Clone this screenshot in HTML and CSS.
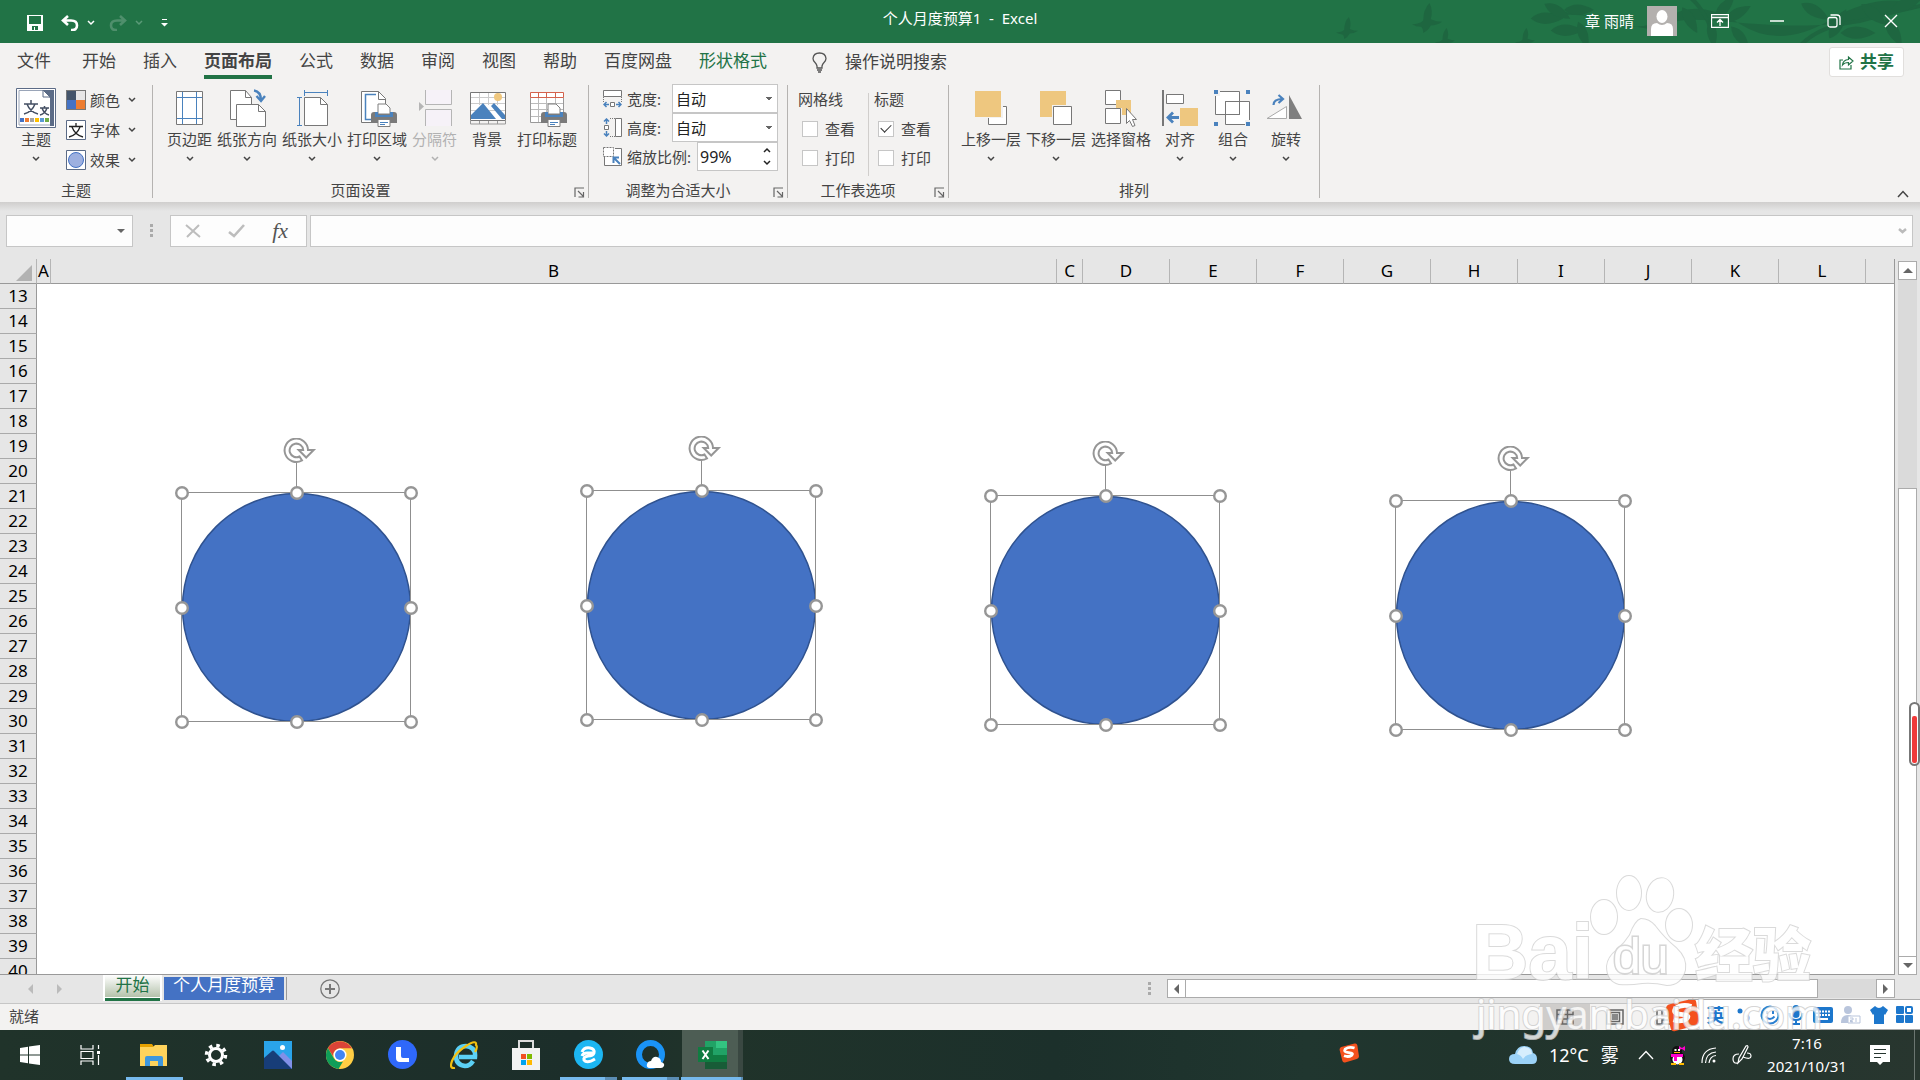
FILE: index.html
```html
<!DOCTYPE html>
<html lang="zh-CN">
<head>
<meta charset="utf-8">
<title>个人月度预算1 - Excel</title>
<link rel="stylesheet" href="styles.css">
</head>
<body>
<svg class="defs" width="0" height="0" aria-hidden="true">
  <defs>
    <symbol id="chev" viewBox="0 0 8 6"><path d="M1 1l3 3 3-3" fill="none" stroke="currentColor" stroke-width="1.500"/></symbol>
    <symbol id="launcher" viewBox="0 0 11 11"><path d="M1 10V1h9M4 4l5 5M9.500 5v5h-5" fill="none" stroke="#666" stroke-width="1.200"/></symbol>
    <symbol id="printer" viewBox="0 0 26 24">
      <path d="M3 9h20q3 0 3 3v8H0v-8q0-3 3-3z" fill="#7a7a7a"/>
      <path d="M7 1h8l4 4v6H7z" fill="#fff" stroke="#7f7f7f"/>
      <path d="M4 9h3v3h12V9h3v5H4z" fill="#4a82bd"/><path d="M7 16.500h12v7H7z" fill="#fff" stroke="#7f7f7f"/>
      <path d="M9 19.500h8M9 21.500h5" stroke="#4a82bd"/>
    </symbol>
    <symbol id="leaf" viewBox="0 0 30 12"><path d="M0 6Q12-5 30 6 12 16 0 6z"/></symbol>
    <symbol id="bird" viewBox="0 0 24 24"><path d="M0 17q6 0 9-3Q9 5 14 0q3 6 1 13 5 2 9 2-4 3-9 3-2 4-6 6 0-4-2-5-4 0-7-2z"/></symbol>
    <symbol id="sogou" viewBox="0 0 36 36">
      <path d="M4 7l24-6q4-1 5 3l3 20q0 4-4 5L11 35q-4 1-5-3L1 12q0-4 3-5z" fill="#f4511e"/>
      <path d="M28 9q-10-3-17 2-3 5 4 6l7 1q4 1 1 4-6 4-14 1" fill="none" stroke="#fff" stroke-width="5"/>
    </symbol>
    <symbol id="handles" viewBox="0 0 246 294">
      <path d="M121.500 25v30" stroke="#8f8f8f"/>
      <circle cx="121.500" cy="169.500" r="114" fill="#4472c4" stroke="#2f528f" stroke-width="1.500"/>
      <rect x="6.500" y="54.500" width="229" height="229" fill="none" stroke="#8f8f8f"/>
      <g fill="#fff" stroke="#969696" stroke-width="2.400">
        <circle cx="7" cy="55" r="5.800"/><circle cx="122" cy="55" r="5.800"/><circle cx="236" cy="55" r="5.800"/>
        <circle cx="7" cy="170" r="5.800"/><circle cx="236" cy="170" r="5.800"/>
        <circle cx="7" cy="284" r="5.800"/><circle cx="122" cy="284" r="5.800"/><circle cx="236" cy="284" r="5.800"/>
      </g>
      <path d="M133 12a11.700 11.700 0 1 0-6 10.500l-2.500-4a6.800 6.800 0 1 1 3.700-6.500h-4.500l7.500 7.500 7.500-7.500z" fill="#fff" stroke="#969696" stroke-width="2"/>
    </symbol>
  </defs>
</svg>

<div class="app">
  <header class="title-bar">
    <svg class="foliage" width="620" height="43" viewBox="0 0 620 43" fill="#1e6640" aria-hidden="true">
      <use href="#bird" x="36" y="17" width="22" height="22"/><use href="#bird" x="112" y="3" width="30" height="30"/>
      <use href="#bird" x="132" y="28" width="26" height="20"/><use href="#bird" x="212" y="28" width="26" height="20"/>
      <path d="M240 18q40-8 70 4t60-6 70 8 90-4 90-14v2q-50 12-88 16t-100-2-62 4-62-6-68 0z"/>
      <path d="M390 0q18 16 22 43h3Q414 20 396 0zM500 43q20-20 60-24l60-15v3l-60 16q-36 4-54 20z"/>
      <g>
        <use href="#leaf" x="230" y="12" width="34" height="13"/><use href="#leaf" x="244" y="0" width="30" height="14" transform="rotate(30 250 6)"/>
        <use href="#leaf" x="250" y="24" width="34" height="13"/><use href="#leaf" x="278" y="24" width="28" height="12" transform="rotate(70 284 26)"/>
        <use href="#leaf" x="262" y="4" width="34" height="12"/><use href="#leaf" x="376" y="14" width="30" height="16" transform="rotate(60 392 20)"/>
        <use href="#leaf" x="410" y="6" width="30" height="12" transform="rotate(-50 420 10)"/><use href="#leaf" x="424" y="12" width="30" height="12" transform="rotate(-30 430 18)"/>
        <use href="#leaf" x="430" y="26" width="28" height="11" transform="rotate(50 436 30)"/><use href="#leaf" x="404" y="20" width="28" height="11" transform="rotate(80 410 26)"/>
        <use href="#leaf" x="500" y="2" width="32" height="13" transform="rotate(30 510 8)"/><use href="#leaf" x="520" y="18" width="34" height="15" transform="rotate(-60 536 24)"/>
        <use href="#leaf" x="540" y="26" width="36" height="14"/><use href="#leaf" x="560" y="4" width="34" height="13" transform="rotate(40 570 8)"/>
        <use href="#leaf" x="584" y="22" width="34" height="13" transform="rotate(60 594 24)"/><use href="#leaf" x="590" y="0" width="34" height="13" transform="rotate(-20 600 6)"/>
      </g>
    </svg>
    <div class="quick-access">
      <button class="plain save" aria-label="保存"><svg width="16" height="16" viewBox="0 0 16 16"><path d="M0 0h16v16H0z" fill="#fff"/><path d="M2 1h12v8H2zM5 11h6v4H8v-3H7v3H5z" fill="#217346"/></svg></button>
      <button class="plain undo" aria-label="撤消"><svg width="18" height="16" viewBox="0 0 18 16" fill="none" stroke="#fff" stroke-width="2.600"><path d="M7 1L2 5.500 7 10M2 5.500h8q6 0 6 5t-6 4.500"/></svg></button>
      <button class="plain drop" aria-label="撤消列表"><svg width="8" height="6" color="#fff"><use href="#chev"/></svg></button>
      <button class="plain redo" aria-label="恢复" disabled><svg width="18" height="16" viewBox="0 0 18 16" fill="none" stroke="#4f8f6c" stroke-width="2.600"><path d="M11 1l5 4.500L11 10M16 5.500H8q-6 0-6 5t6 4.500"/></svg></button>
      <button class="plain drop" aria-label="恢复列表" disabled><svg width="8" height="6" color="#5b9a78"><use href="#chev"/></svg></button>
      <button class="plain customize" aria-label="自定义快速访问工具栏"><svg width="7" height="8" viewBox="0 0 7 8" fill="#fff"><path d="M1 0h5v1H1zM0 4h7L3.500 7.500z"/></svg></button>
    </div>
    <h1 class="doc-title">个人月度预算1 &nbsp;- &nbsp;Excel</h1>
    <div class="window-tools">
      <span class="user">章 雨晴</span>
      <svg class="avatar" width="30" height="30" viewBox="0 0 30 30"><path d="M0 0h30v30H0z" fill="#b3b0ae"/><ellipse cx="15" cy="10.500" rx="5.500" ry="6.500" fill="#fff"/><path d="M4 30V23q0-6 6-6 5 4 10 0 6 0 6 6v7z" fill="#fff"/></svg>
      <button class="plain win" aria-label="功能区显示选项"><svg width="18" height="14" viewBox="0 0 18 14" fill="none" stroke="#fff"><path d="M.5.5h17v13H.5zM.5 3.500h17M9 12V6M6 8.500l3-3 3 3" stroke-width="1.300"/></svg></button>
      <button class="plain win" aria-label="最小化"><svg width="14" height="2" viewBox="0 0 14 2"><path d="M0 1h14" stroke="#fff" stroke-width="1.500"/></svg></button>
      <button class="plain win" aria-label="还原"><svg width="14" height="14" viewBox="0 0 14 14" fill="none" stroke="#fff" stroke-width="1.300"><rect x="1" y="3.500" width="9" height="9.500" rx="2"/><path d="M3.500 1H10q3 0 3 3v7"/></svg></button>
      <button class="plain win" aria-label="关闭"><svg width="14" height="14" viewBox="0 0 14 14" stroke="#fff" stroke-width="1.400"><path d="M1 1l12 12M13 1L1 13"/></svg></button>
    </div>
  </header>

  <nav class="tabs">
    <a class="tab file" href="#">文件</a><a class="tab" href="#">开始</a><a class="tab" href="#">插入</a><a class="tab active" href="#">页面布局</a><a class="tab" href="#">公式</a><a class="tab" href="#">数据</a><a class="tab" href="#">审阅</a><a class="tab" href="#">视图</a><a class="tab" href="#">帮助</a><a class="tab" href="#">百度网盘</a><a class="tab contextual" href="#">形状格式</a>
    <button class="plain tell-me"><svg width="15" height="21" viewBox="0 0 15 21" fill="none" stroke="#555" stroke-width="1.300"><path d="M5 16v-2Q4.500 12 3 10.500 1 8.500 1 6.500 1.500 1 7.500 1T14 6.500q0 2-2 4-1.500 1.500-2 3.500v2zM5 18h5M6 20h3"/></svg><span>操作说明搜索</span></button>
    <button class="share"><svg width="15" height="15" viewBox="0 0 15 15" fill="none" stroke="#217346" stroke-width="1.200"><path d="M4 5H1v9h11v-4M3.500 10Q4 5 9.500 4.500V2l4.500 4-4.500 4V7.500Q5.500 7.500 3.500 10z"/></svg><span>共享</span></button>
  </nav>

  <section class="ribbon">
    <div class="group g-theme">
      <div class="tools">
        <button class="big w46"><svg width="40" height="40" viewBox="0 0 40 40"><path d="M.5.500h39v39H.5z" fill="#fff" stroke="#5b6b86"/><path d="M3 2.500h28l6 7V37H3z" fill="#fff" stroke="#9aa5b8"/><path d="M27 2h11v36h-4V10z" fill="#5b6b86"/><path d="M27 2v7h7z" fill="#fff" stroke="#5b6b86"/><g fill="none" stroke="#444f63" stroke-width="1.500"><path d="M8 16h14M15 12v4M11 16q3 8 11 10M19 16q-3 8-11 10M24 20h9M28.500 18v2M26 20q2 6 7 7M31 20q-2 6-7 7"/></g><path d="M4 30h4v4H4z" fill="#4472c4"/><path d="M9 30h4v4H9z" fill="#ed7d31"/><path d="M14 30h4v4h-4z" fill="#a5a5a5"/><path d="M19 30h4v4h-4z" fill="#ffc000"/><path d="M24 30h4v4h-4z" fill="#5b9bd5"/><path d="M29 30h4v4h-4z" fill="#70ad47"/></svg><span>主题</span><svg class="chev" width="8" height="6"><use href="#chev"/></svg></button>
        <div class="stack">
          <button class="small"><svg width="20" height="20" viewBox="0 0 20 20"><path d="M0 0h20v20H0z" fill="#777"/><path d="M1 1h9v9H1z" fill="#44546a"/><path d="M10 1h9v9h-9z" fill="#e7e6e6"/><path d="M1 10h9v9H1z" fill="#4472c4"/><path d="M10 10h9v9h-9z" fill="#ed7d31"/></svg><span>颜色</span><svg class="chev" width="8" height="6"><use href="#chev"/></svg></button>
          <button class="small"><svg width="20" height="20" viewBox="0 0 20 20"><path d="M.5.500h19v19H.5z" fill="#fff" stroke="#5b6b86"/><path d="M3 6.500h14M10 3v3M6 7q3 8 11 10M14 7q-3 8-11 10" fill="none" stroke="#222" stroke-width="1.300"/></svg><span>字体</span><svg class="chev" width="8" height="6"><use href="#chev"/></svg></button>
          <button class="small"><svg width="20" height="20" viewBox="0 0 20 20"><path d="M.5.500h19v19H.5z" fill="#fff" stroke="#5b6b86"/><circle cx="10" cy="10" r="7.500" fill="#9db0e0" stroke="#4472c4"/></svg><span>效果</span><svg class="chev" width="8" height="6"><use href="#chev"/></svg></button>
        </div>
      </div>
      <div class="caption">主题</div>
    </div>

    <div class="group g-page">
      <div class="tools">
        <button class="big w45"><svg width="40" height="40" viewBox="0 0 40 40"><path d="M6.500 3.500h26v33h-26z" fill="#fff" stroke="#777"/><path d="M12.500 4v32M26.500 4v32M7 9.500h25M7 30.500h25" stroke="#4a82bd"/></svg><span>页边距</span><svg class="chev" width="8" height="6"><use href="#chev"/></svg></button>
        <button class="big w60"><svg width="40" height="40" viewBox="0 0 40 40"><path d="M3.500 2.500h15l6 7v22h-21z" fill="#fff" stroke="#777"/><path d="M18.500 2.500v7h6" fill="none" stroke="#777"/><path d="M9.500 16.500h22l7 7v15h-29z" fill="#fff" stroke="#777"/><path d="M31.500 16.500v7h7" fill="none" stroke="#777"/><path d="M27 2.500q7 1 7 10M29.500 8l4.500 5 4-5" fill="none" stroke="#4a82bd" stroke-width="2.400"/></svg><span>纸张方向</span><svg class="chev" width="8" height="6"><use href="#chev"/></svg></button>
        <button class="big w60"><svg width="40" height="40" viewBox="0 0 40 40"><path d="M12.500 9.500h16l7 7v21h-23z" fill="#fff" stroke="#777"/><path d="M28.500 9.500v7h7" fill="none" stroke="#777"/><path d="M12.500 2v6M35.500 2v6M13 4.500h22M5 9.500h5M5 37.500h5M7.500 10v27" stroke="#4a82bd"/></svg><span>纸张大小</span><svg class="chev" width="8" height="6"><use href="#chev"/></svg></button>
        <button class="big w60"><svg width="40" height="40" viewBox="0 0 40 40"><path d="M4.500 3.500h17l7 7v24h-24z" fill="#fff" stroke="#777"/><path d="M21.500 3.500v8h7" fill="none" stroke="#777"/><path d="M19 6.500H8.500v25H16" fill="none" stroke="#4a82bd" stroke-width="1.500"/><use href="#printer" x="14" y="15" width="26" height="24"/></svg><span>打印区域</span><svg class="chev" width="8" height="6"><use href="#chev"/></svg></button>
        <button class="big w45" disabled><svg width="40" height="40" viewBox="0 0 40 40"><path d="M11 2h25v14H11zM11 21h25v17H11z" fill="#f6f2f8"/><path d="M10.500 2v14.500h26V2M10.500 38V21.500h26V38" fill="none" stroke="#b5b5b5"/><path d="M4 14v9l5-4.500z" fill="#b5b5b5"/></svg><span>分隔符</span><svg class="chev" width="8" height="6"><use href="#chev"/></svg></button>
        <button class="big w50"><svg width="40" height="40" viewBox="0 0 40 40"><path d="M3.500 4.500h35v28h-35z" fill="#fff" stroke="#777"/><path d="M4 9.500h34M4 15.500h34M4 22.500h34M12.500 5v12M21.500 5v12M30.500 5v12" stroke="#ccc"/><circle cx="31" cy="9" r="4" fill="#efc77e"/><path d="M4 31v-4l12-12 13 16zM24 18l3-3 11 12v4h-3z" fill="#4a82bd"/><path d="M3.500 32v4h35v-4M12.500 33v3M21.500 33v3M30.500 33v3" fill="none" stroke="#999"/></svg><span>背景</span></button>
        <button class="big w60"><svg width="40" height="40" viewBox="0 0 40 40"><path d="M3.500 9.500h33v25h-33z" fill="#fff" stroke="#999"/><path d="M4 15.500h32M4 21.500h32M4 28.500h20M11.500 9v25M19.500 9v25M28.500 9v14" stroke="#bbb"/><path d="M3.500 4.500h33v5h-33zM11.500 4v6M19.500 4v6M28.500 4v6" fill="#fff" stroke="#d4624c"/><use href="#printer" x="14" y="15" width="26" height="24"/></svg><span>打印标题</span></button>
      </div>
      <div class="caption">页面设置<button class="plain launch" aria-label="页面设置选项"><svg width="11" height="11"><use href="#launcher"/></svg></button></div>
    </div>

    <div class="group g-scale">
      <div class="fields">
        <div class="field"><svg width="19" height="19" viewBox="0 0 19 19"><path d="M.5 1.500h18v6H.5z" fill="#fff" stroke="#777"/><path d="M.5 8v5M18.500 8v5" stroke="#777" stroke-dasharray="1 1"/><path d="M6 15.500H1M3.500 13L1 15.500 3.500 18M13 15.500h5M15.500 13l2.500 2.500-2.500 2.500" fill="none" stroke="#4a82bd" stroke-width="1.500"/><path d="M7.500 13.500h4v4h-4z" fill="#fff" stroke="#777"/></svg><label for="fit-w">宽度:</label><select id="fit-w"><option>自动</option></select></div>
        <div class="field"><svg width="19" height="19" viewBox="0 0 19 19"><path d="M12.500.500h6v18h-6z" fill="#fff" stroke="#777"/><path d="M12 .5H7M12 18.500H7" stroke="#777" stroke-dasharray="1 1"/><path d="M3.500 6V1M1 3.500L3.500 1 6 3.500M3.500 13v5M1 15.500L3.500 18 6 15.500" fill="none" stroke="#4a82bd" stroke-width="1.500"/><path d="M1.500 7.500h4v4h-4z" fill="#fff" stroke="#777"/></svg><label for="fit-h">高度:</label><select id="fit-h"><option>自动</option></select></div>
        <div class="field"><svg width="19" height="19" viewBox="0 0 19 19"><path d="M1.500 10v8.500h17v-17H12" fill="#fff" stroke="#777"/><path d="M.5.500h10v9H.5z" fill="#fff" stroke="#777" stroke-dasharray="2 1"/><path d="M17 17l-6-6M10.500 16v-5.500H16" fill="none" stroke="#4a82bd" stroke-width="2"/></svg><label for="fit-s">缩放比例:</label><span class="spin"><input id="fit-s" type="text" value="99%"><span class="spin-buttons"><button class="plain" aria-label="增大"><svg class="flip" width="8" height="6"><use href="#chev"/></svg></button><button class="plain" aria-label="减小"><svg width="8" height="6"><use href="#chev"/></svg></button></span></span></div>
      </div>
      <div class="caption">调整为合适大小<button class="plain launch" aria-label="缩放选项"><svg width="11" height="11"><use href="#launcher"/></svg></button></div>
    </div>

    <div class="group g-options">
      <div class="options">
        <fieldset class="checks"><legend>网格线</legend><label><input type="checkbox">查看</label><label><input type="checkbox">打印</label></fieldset>
        <i class="rule"></i>
        <fieldset class="checks"><legend>标题</legend><label><input type="checkbox" checked>查看</label><label><input type="checkbox">打印</label></fieldset>
      </div>
      <div class="caption">工作表选项<button class="plain launch" aria-label="工作表选项"><svg width="11" height="11"><use href="#launcher"/></svg></button></div>
    </div>

    <div class="group g-arrange">
      <div class="tools">
        <button class="big w60"><svg width="40" height="40" viewBox="0 0 40 40"><path d="M17.500 18.500h18v18h-18z" fill="#fff" stroke="#777"/><path d="M3 3h29v27H3z" fill="#f3f2f1"/><path d="M4 3h26v26H4z" fill="#eec77f"/></svg><span>上移一层</span><svg class="chev" width="8" height="6"><use href="#chev"/></svg></button>
        <button class="big w60"><svg width="40" height="40" viewBox="0 0 40 40"><path d="M4 3h26v26H4z" fill="#eec77f"/><path d="M16 17h21v21H16z" fill="#f3f2f1"/><path d="M17.500 18.500h18v18h-18z" fill="#fff" stroke="#777"/></svg><span>下移一层</span><svg class="chev" width="8" height="6"><use href="#chev"/></svg></button>
        <button class="big w60"><svg width="40" height="40" viewBox="0 0 40 40"><path d="M4.500 2.500h15v14h-15zM4.500 20.500h15v15h-15z" fill="#fff" stroke="#777"/><path d="M15 12h15v15h-9v-7h-6z" fill="#eec77f"/><path d="M25.500 20.500v15l3-3 3 6 2.500-1-2.500-6h4z" fill="#fff" stroke="#777"/></svg><span>选择窗格</span></button>
        <button class="big w48"><svg width="40" height="40" viewBox="0 0 40 40"><path d="M2 2h2v36H2z" fill="#777"/><path d="M6.500 6.500h17v9h-17z" fill="#fff" stroke="#777"/><path d="M20 20h18v18H20z" fill="#eec77f"/><path d="M19 29.500H8M13 24.500l-5 5 5 5" fill="none" stroke="#4a82bd" stroke-width="2.800"/></svg><span>对齐</span><svg class="chev" width="8" height="6"><use href="#chev"/></svg></button>
        <button class="big w48"><svg width="40" height="40" viewBox="0 0 40 40"><path d="M2.500 3.500h24v23h-24zM12.500 13.500h24v23h-24z" fill="#fff" stroke="#777"/><path d="M12.500 26.500v-13h14v13z" fill="none" stroke="#777"/><path d="M0 1h7v7H0zM32 1h7v7h-7zM0 32h7v7H0zM32 32h7v7h-7z" fill="#f3f2f1"/><path d="M1 2h4v4H1zM33 2h4v4h-4zM1 34h4v4H1zM33 34h4v4h-4z" fill="#4a82bd"/></svg><span>组合</span><svg class="chev" width="8" height="6"><use href="#chev"/></svg></button>
        <button class="big w48"><svg width="40" height="40" viewBox="0 0 40 40"><path d="M1 30.500L20.500 18.500v12z" fill="#fff" stroke="#aaa"/><path d="M23 7v24h13z" fill="#7f7f7f"/><path d="M7.500 17q0-6 9-6M12.500 7l4.500 4-4.500 4" fill="none" stroke="#4a82bd" stroke-width="2.200"/></svg><span>旋转</span><svg class="chev" width="8" height="6"><use href="#chev"/></svg></button>
      </div>
      <div class="caption">排列</div>
    </div>
    <button class="plain collapse" aria-label="折叠功能区"><svg width="12" height="8" viewBox="0 0 12 8"><path d="M1 7l5-5.500L11 7" fill="none" stroke="#444" stroke-width="1.500"/></svg></button>
  </section>

  <section class="formula-bar">
    <div class="name-box"><input type="text" aria-label="名称框"><i class="tri-down"></i></div>
    <i class="dots"></i>
    <div class="fx-box">
      <button class="plain" aria-label="取消"><svg width="16" height="14" viewBox="0 0 16 14"><path d="M1 1l14 12M14 1L2 13" stroke="#bdbdbd" stroke-width="2"/></svg></button>
      <button class="plain" aria-label="输入"><svg width="17" height="14" viewBox="0 0 17 14"><path d="M1 8l5 4L16 1" fill="none" stroke="#bdbdbd" stroke-width="2.600"/></svg></button>
      <button class="plain fx">fx</button>
    </div>
    <div class="formula"><input type="text" aria-label="编辑栏"><svg width="9" height="6" viewBox="0 0 9 6"><path d="M1 1l3.500 3L8 1" fill="none" stroke="#bbb" stroke-width="2.500"/></svg></div>
  </section>

  <main class="workspace">
    <div class="sheet">
      <table class="cells">
        <colgroup><col class="c-row"><col class="c-a"><col class="c-b"><col class="c-c"><col class="c-n"><col class="c-n"><col class="c-n"><col class="c-n"><col class="c-n"><col class="c-n"><col class="c-n"><col class="c-n"><col class="c-n"><col></colgroup>
        <thead><tr><th class="corner"><svg width="16" height="16" viewBox="0 0 16 16"><path d="M16 0v16H0z" fill="#b2b2b2"/></svg></th><th>A</th><th>B</th><th>C</th><th>D</th><th>E</th><th>F</th><th>G</th><th>H</th><th>I</th><th>J</th><th>K</th><th>L</th><th></th></tr></thead>
        <tbody>
          <tr><th>13</th><td colspan="13"></td></tr><tr><th>14</th><td colspan="13"></td></tr><tr><th>15</th><td colspan="13"></td></tr><tr><th>16</th><td colspan="13"></td></tr>
          <tr><th>17</th><td colspan="13"></td></tr><tr><th>18</th><td colspan="13"></td></tr><tr><th>19</th><td colspan="13"></td></tr><tr><th>20</th><td colspan="13"></td></tr>
          <tr><th>21</th><td colspan="13"></td></tr><tr><th>22</th><td colspan="13"></td></tr><tr><th>23</th><td colspan="13"></td></tr><tr><th>24</th><td colspan="13"></td></tr>
          <tr><th>25</th><td colspan="13"></td></tr><tr><th>26</th><td colspan="13"></td></tr><tr><th>27</th><td colspan="13"></td></tr><tr><th>28</th><td colspan="13"></td></tr>
          <tr><th>29</th><td colspan="13"></td></tr><tr><th>30</th><td colspan="13"></td></tr><tr><th>31</th><td colspan="13"></td></tr><tr><th>32</th><td colspan="13"></td></tr>
          <tr><th>33</th><td colspan="13"></td></tr><tr><th>34</th><td colspan="13"></td></tr><tr><th>35</th><td colspan="13"></td></tr><tr><th>36</th><td colspan="13"></td></tr>
          <tr><th>37</th><td colspan="13"></td></tr><tr><th>38</th><td colspan="13"></td></tr><tr><th>39</th><td colspan="13"></td></tr><tr><th>40</th><td colspan="13"></td></tr>
        </tbody>
      </table>
      <svg class="shape s1" width="246" height="294"><use href="#handles"/></svg>
      <svg class="shape s2" width="246" height="294"><use href="#handles"/></svg>
      <svg class="shape s3" width="246" height="294"><use href="#handles"/></svg>
      <svg class="shape s4" width="246" height="294"><use href="#handles"/></svg>
    </div>
    <div class="v-scroll">
      <button class="scroll-btn" aria-label="向上"><i class="arrow up"></i></button>
      <div class="v-gap"></div><div class="v-thumb"></div>
      <button class="scroll-btn" aria-label="向下"><i class="arrow down"></i></button>
    </div>
  </main>

  <div class="sheet-bar">
    <div class="sheet-nav"><i class="arrow left pale"></i><i class="arrow right pale"></i></div>
    <a class="sheet-tab current" href="#">开始</a>
    <a class="sheet-tab blue" href="#">个人月度预算</a>
    <button class="plain add" aria-label="新工作表"><svg width="20" height="20" viewBox="0 0 20 20"><circle cx="10" cy="10" r="9.200" fill="none" stroke="#777" stroke-width="1.300"/><path d="M10 5v10M5 10h10" stroke="#777" stroke-width="2"/></svg></button>
    <i class="dots"></i>
    <div class="h-scroll">
      <button class="scroll-btn" aria-label="向左"><i class="arrow left"></i></button>
      <div class="h-thumb"></div><div class="h-gap"></div>
      <button class="scroll-btn" aria-label="向右"><i class="arrow right"></i></button>
    </div>
  </div>

  <footer class="status">
    <span>就绪</span>
    <div class="views">
      <button class="plain view on" aria-label="普通"><svg width="18" height="16" viewBox="0 0 18 16" fill="none" stroke="#666" stroke-width="1.500"><path d="M1 1h16v14H1zM1 5.500h16M1 10h16M6.500 1v14M11.500 1v14"/></svg></button>
      <button class="plain view" aria-label="页面布局视图"><svg width="18" height="16" viewBox="0 0 18 16" fill="none" stroke="#666" stroke-width="1.500"><path d="M1 1h16v14H1zM4.500 3.500h9v9h-9zM6 6h6M6 8h6M6 10h6"/></svg></button>
      <button class="plain view" aria-label="分页预览"><svg width="18" height="16" viewBox="0 0 18 16" fill="none" stroke="#666" stroke-width="1.500"><path d="M1 1h16v14H1zM6 1v6h6V1M6 15v-4h6"/></svg></button>
    </div>
  </footer>

  <footer class="taskbar">
    <button class="plain task" aria-label="开始菜单"><svg width="20" height="20" viewBox="0 0 20 20" fill="#fff"><path d="M0 3l8-1.200V9.500H0zM9 1.600L20 0v9.500H9zM0 10.500h8v7.700L0 17zM9 10.500h11V20L9 18.400z"/></svg></button>
    <button class="plain task" aria-label="任务视图"><svg width="20" height="20" viewBox="0 0 20 20" fill="none" stroke="#fff" stroke-width="1.200"><path d="M1 0v4h12V0M1 20v-4h12v4M1 6.500h12v7H1zM18.500 0v4M18.500 10v10"/><path d="M17 6h3v3h-3z" fill="#fff" stroke="none"/></svg></button>
    <button class="plain task" aria-label="文件资源管理器"><svg width="28" height="24" viewBox="0 0 28 24"><path d="M0 1h12l2 3H0z" fill="#e6a100"/><path d="M0 4h13l2-2h12v21H0z" fill="#ffd35c"/><path d="M5 23V15q0-2 2-2h14q2 0 2 2v8h-5v-5h-8v5z" fill="#3f97dd"/></svg></button>
    <button class="plain task" aria-label="设置"><svg width="24" height="24" viewBox="0 0 24 24"><circle cx="12" cy="12" r="6.500" fill="none" stroke="#fff" stroke-width="3"/><circle cx="12" cy="12" r="9.500" fill="none" stroke="#fff" stroke-width="3.500" stroke-dasharray="3.500 3.960"/></svg></button>
    <button class="plain task" aria-label="照片"><svg width="28" height="28" viewBox="0 0 28 28"><path d="M0 0h28v28H0z" fill="#2aa4ea"/><path d="M15 15l4-4 9 9v8H15z" fill="#8190e8"/><path d="M0 17l8-7q1-1 2 0l18 18H0z" fill="#173d78"/><circle cx="18.500" cy="6.500" r="2.500" fill="#fff"/></svg></button>
    <button class="plain task" aria-label="Chrome"><svg width="28" height="28" viewBox="0 0 28 28"><circle cx="14" cy="14" r="14" fill="#ffce44"/><path d="M1.900 7A14 14 0 0 1 26.100 7.300H14A7 7 0 0 0 7.500 16z" fill="#db4437"/><path d="M1.900 7L8 17.500A7 7 0 0 0 17 20.400L12.500 28A14 14 0 0 1 1.900 7z" fill="#0f9d58"/><circle cx="14" cy="14" r="6.500" fill="#fff"/><circle cx="14" cy="14" r="5" fill="#4285f4"/></svg></button>
    <button class="plain task" aria-label="联想"><svg width="29" height="29" viewBox="0 0 29 29"><circle cx="14.500" cy="14.500" r="14.500" fill="#2f68fa"/><path d="M8 7h5v9q0 2 2 2h6v4h-9q-4 0-4-4z" fill="#fff"/></svg></button>
    <button class="plain task" aria-label="Internet Explorer"><svg width="28" height="28" viewBox="0 0 28 28" fill="none"><path d="M23 20q-3 5-8 5-9-1-9-10 1-10 10-10 10 1 9 11H9" stroke="#5bd0f5" stroke-width="4.500"/><path d="M5 27q-6 1-3-7T16 5t10-1q2 2-1 7" stroke="#f3c011" stroke-width="2.200"/></svg></button>
    <button class="plain task" aria-label="Microsoft Store"><svg width="28" height="30" viewBox="0 0 28 30"><path d="M7 9V1h14v8" fill="none" stroke="#ddd" stroke-width="2"/><path d="M0 8h28v22H0z" fill="#f2f2f2"/><path d="M9 14h5v5H9z" fill="#f25022"/><path d="M15 14h5v5h-5z" fill="#7fba00"/><path d="M9 20h5v5H9z" fill="#00a4ef"/><path d="M15 20h5v5h-5z" fill="#ffb900"/></svg></button>
    <button class="plain task running" aria-label="2345浏览器"><svg width="29" height="29" viewBox="0 0 29 29"><circle cx="14.500" cy="14.500" r="14.500" fill="#1cb6f2"/><path d="M8 12q2-5 8-4 5 1 4 5-1 3-6 3-5 1-4 4 3 4 11-1M8 16q1-3 5-3h8" fill="none" stroke="#fff" stroke-width="3"/></svg></button>
    <button class="plain task running" aria-label="QQ浏览器"><svg width="29" height="29" viewBox="0 0 29 29"><circle cx="14.500" cy="14.500" r="11.500" fill="none" stroke="#1a93f6" stroke-width="6"/><path d="M13 28q-3-1-2-4 1-3 4-3 2-5 6-4 4 1 4 5 4 1 3 4-1 2-3 2z" fill="#fff"/></svg></button>
    <button class="plain task current running" aria-label="Excel"><svg width="29" height="28" viewBox="0 0 29 28"><path d="M7 0h11v7H7z" fill="#21a366"/><path d="M18 0h11v7H18z" fill="#33c481"/><path d="M7 7h22v7H7z" fill="#21a366"/><path d="M7 14h22v7H7z" fill="#107c41"/><path d="M7 21h22v7H7z" fill="#185c37"/><path d="M0 6h15v15H0z" fill="#107c41"/><path d="M4.500 9.500l6 8.500M10.500 9.500l-6 8.500" stroke="#fff" stroke-width="2"/></svg></button>
    <svg class="sogou-mini" width="20" height="20"><use href="#sogou"/></svg>
    <div class="weather"><svg width="28" height="18" viewBox="0 0 28 18"><path d="M6 18q-6 0-6-5t6-5q2-8 9-8 8 0 9 7 4 1 4 6 0 5-5 5z" fill="#9bd2f7"/><path d="M8 8q3-8 8-7 7 1 7 7-7 1-9 5-2-4-6-5z" fill="#d6eefd"/></svg><span>12°C</span><span>雾</span></div>
    <div class="tray">
      <svg width="16" height="10" viewBox="0 0 16 10"><path d="M1 9l7-7.500L15 9" fill="none" stroke="#fff" stroke-width="1.300"/></svg>
      <svg width="17" height="20" viewBox="0 0 17 20"><ellipse cx="8.500" cy="13" rx="7.500" ry="6.500" fill="#111"/><circle cx="8" cy="6" r="5" fill="#111"/><ellipse cx="8.500" cy="14.500" rx="5" ry="5" fill="#fff"/><path d="M2 9h12v3H8v4H5v-4H2zM10 1l3 2 3-2v5l-3-2-3 1z" fill="#f0c"/><path d="M5 7h6v1H5zM2 18h5v2H2zM10 18h5v2h-5z" fill="#fb0"/><path d="M5.500 4h2v2h-2zM9 4h2v2H9z" fill="#fff"/></svg>
      <svg width="16" height="16" viewBox="0 0 16 16" fill="none" stroke="#fff" stroke-width="1.200"><path d="M1 16Q1 2 15 1M4.500 16Q5 6 15 5M8 16q1-7 7-7.500"/><circle cx="13" cy="14" r="1.500" fill="#fff" stroke="none"/></svg>
      <svg width="20" height="20" viewBox="0 0 20 20" fill="none" stroke="#fff" stroke-width="1.200"><path d="M6 18l1-5L14 1q2-1 2 1L10 14zM7 9q-6 0-6 5t5 4M11 12q8 3 8-1 0-3-4-3"/></svg>
    </div>
    <div class="clock"><time>7:16</time><time>2021/10/31</time></div>
    <button class="plain notice" aria-label="通知"><svg width="20" height="20" viewBox="0 0 20 20"><path d="M0 0h20v17h-7l-3 3-3-3H0z" fill="#fff"/><path d="M4 4.500h12M4 8.500h12M4 12.500h7" stroke="#26352f" stroke-width="1.200"/></svg></button>
    <i class="show-desktop"></i>
  </footer>

  <div class="ime">
    <svg width="36" height="34"><use href="#sogou"/></svg>
    <b>英</b>
    <svg width="14" height="14" viewBox="0 0 14 14"><circle cx="3" cy="3" r="2.500" fill="#1d77cc"/><path d="M10 7q3 3 0 6" fill="none" stroke="#8cc0f0" stroke-width="2.500"/></svg>
    <svg width="20" height="20" viewBox="0 0 20 20"><circle cx="10" cy="10" r="8.500" fill="none" stroke="#2b80d1" stroke-width="2"/><path d="M7 6v3M13 6v3M5.500 11.500q4.500 5 9 0" fill="none" stroke="#2b80d1" stroke-width="2"/></svg>
    <svg width="16" height="20" viewBox="0 0 16 20"><rect x="4.500" y="0" width="7" height="13" rx="3.500" fill="#1d77cc"/><path d="M1.500 8q0 7 6.500 7t6.500-7M8 15v4M4 19h8" fill="none" stroke="#1d77cc" stroke-width="2"/></svg>
    <svg width="20" height="16" viewBox="0 0 20 16"><rect width="20" height="16" rx="2" fill="#1d77cc"/><path d="M3 4.500h14M3 8h14" stroke="#fff" stroke-width="2" stroke-dasharray="2 1"/><path d="M5 12h10" stroke="#fff" stroke-width="2"/></svg>
    <svg width="20" height="18" viewBox="0 0 20 18"><circle cx="7" cy="4" r="4" fill="#b9c5dc"/><path d="M0 17q0-8 7-8 3 0 5 2v6z" fill="#b9c5dc"/><path d="M7 10h12v7H7zM9 12h3v2H9.500v2H12M15 12v4" fill="#fff" stroke="#b9c5dc"/></svg>
    <svg width="18" height="18" viewBox="0 0 18 18"><path d="M5 0q4 4 8 0l5 4-3 5-1-1v10H4V8L3 9 0 4z" fill="#1d77cc"/></svg>
    <svg width="17" height="17" viewBox="0 0 17 17" fill="#1d77cc"><rect width="8" height="8" rx="1"/><rect y="9" width="8" height="8" rx="1"/><rect x="9" y="9" width="8" height="8" rx="1"/><rect x="10" y="1" width="6" height="6" rx="1" fill="#fff" stroke="#1d77cc" stroke-width="2"/></svg>
  </div>

  <div class="gauge"><i></i></div>

  <svg class="watermark" width="360" height="186" viewBox="0 0 360 186" aria-hidden="true">
    <g class="mark-shape">
      <text class="mark-bai" x="4" y="120">Bai</text>
      <ellipse cx="136" cy="58" rx="13" ry="17"/><ellipse cx="161" cy="34" rx="12" ry="17"/><ellipse cx="192" cy="36" rx="13" ry="17" transform="rotate(12 192 36)"/><ellipse cx="211" cy="66" rx="13" ry="16"/>
      <path d="M173 60q8 0 14 7 9 12 21 22 11 10 9 22-4 15-18 15-13-3-25-2-12 2-23 1-12-3-12-18 1-9 10-16 8-7 13-15 5-14 11-16z"/>
      <text class="mark-du" x="145" y="114">du</text>
      <text class="mark-cn" x="227" y="117">经验</text>
    </g>
    <text class="mark-url" x="8" y="170">jingyan.baidu.com</text>
  </svg>
</div>
</body>
</html>
```
FILE: styles.css
```css
* { box-sizing: border-box; }

body {
  margin: 0;
  font-family: "Noto Sans", "Noto Sans CJK SC", sans-serif;
  font-size: 15px;
  line-height: 20px;
  color: #444;
}

svg { flex: none; display: block; }
button, input, select { font: inherit; color: inherit; margin: 0; }
a { color: inherit; text-decoration: none; }
.defs { position: absolute; }

.app {
  position: relative;
  display: flex;
  flex-direction: column;
  height: 100vh;
  overflow: hidden;
  background: #e6e6e6;
}

.plain {
  display: flex;
  align-items: center;
  justify-content: center;
  padding: 0;
  border: 0;
  background: none;
}

/* Title bar */
.title-bar {
  position: relative;
  display: grid;
  grid-template-columns: 1fr auto 1fr;
  height: 43px;
  background: #217346;
  color: #fff;
}
.foliage { position: absolute; right: 0; top: 0; }
.quick-access { display: flex; align-items: center; padding: 3px 0 0 27px; }
.save { width: 16px; }
.undo { width: 18px; margin-left: 18px; }
.redo { width: 18px; margin-left: 14px; }
.drop { width: 8px; margin-left: 8px; }
.customize { width: 7px; margin-left: 18px; }
.doc-title { margin: 8px 0 0; font-size: 15px; font-weight: 400; line-height: 20px; }
.window-tools { position: relative; display: flex; align-items: center; justify-content: flex-end; padding: 0 1px 1px 0; }
.avatar { margin: 0 14px 0 13px; }
.win { width: 57px; height: 42px; }

/* Ribbon tabs */
.tabs {
  display: flex;
  align-items: flex-start;
  gap: 27px;
  height: 41px;
  padding: 4px 16px 0 17px;
  background: #f3f2f1;
  font-size: 17px;
}
.tab { height: 32px; line-height: 28px; white-space: nowrap; }
.tab.file { margin-right: 4px; }
.tab.active { font-weight: 700; border-bottom: 4px solid #217346; }
.tab.contextual { color: #217346; }
.tell-me { gap: 18px; margin-left: 18px; height: 30px; }
.share {
  display: flex;
  align-items: center;
  justify-content: center;
  gap: 6px;
  width: 75px;
  height: 30px;
  margin-left: auto;
  padding: 0;
  background: #fff;
  border: 1px solid #e1dfdd;
  border-radius: 3px;
  color: #217346;
  font-weight: 700;
}

/* Ribbon */
.ribbon { display: flex; height: 118px; background: #f3f2f1; }
.group {
  display: flex;
  flex-direction: column;
  margin-bottom: 4px;
  border-right: 1px solid;
  border-image: linear-gradient(transparent 2px, #b5b3b1 2px) 1;
}
.g-theme { width: 153px; }
.g-page { width: 436px; }
.g-scale { width: 199px; }
.g-options { width: 161px; }
.g-arrange { width: 371px; }
.tools { display: flex; gap: 5px; flex: 1; padding-left: 13px; }
.g-theme .tools { gap: 7px; }
.g-page .tools { padding-left: 14px; }
.g-arrange .tools { padding-left: 12px; }
.caption { position: relative; display: flex; justify-content: center; line-height: 20px; height: 18px; }
.g-page .caption, .g-scale .caption, .g-options .caption { padding-right: 20px; }
.launch { position: absolute; right: 3px; bottom: 0; }
.big {
  display: flex;
  flex-direction: column;
  align-items: center;
  padding: 4px 0 0;
  border: 0;
  background: none;
  white-space: nowrap;
}
.big span { margin-top: 1px; }
.big .chev { margin-top: 7px; }
.big:disabled { color: #b1b1b1; }
.w45 { width: 45px; }
.w46 { width: 46px; }
.w48 { width: 48px; }
.w50 { width: 50px; }
.w60 { width: 60px; }
.stack { display: flex; flex-direction: column; padding-top: 1px; }
.small {
  display: flex;
  align-items: center;
  gap: 4px;
  height: 30px;
  padding: 0;
  border: 0;
  background: none;
}
.small .chev { margin-left: 4px; }

.fields { flex: 1; padding: 0 9px 0 14px; }
.field { display: flex; align-items: center; height: 29px; gap: 5px; }
.field select, .spin { margin-left: auto; height: 29px; border: 1px solid #c6c6c6; background-color: #fff; color: #222; }
.field select {
  appearance: none;
  width: 106px;
  padding: 0 3px;
  border-radius: 0;
  background-image: linear-gradient(to top right, transparent 50%, #666 50%), linear-gradient(to top left, transparent 50%, #666 50%);
  background-size: 4px 4px;
  background-position: right 8px center, right 4px center;
  background-repeat: no-repeat;
}
.spin { display: flex; width: 81px; }
.spin input { width: 52px; border: 0; padding: 0 2px; background: none; font-size: 16px; }
.spin-buttons { display: flex; flex-direction: column; justify-content: space-around; margin-left: auto; width: 20px; }
.flip { transform: rotate(180deg); }

.options { display: flex; flex: 1; padding: 1px 0 0 10px; }
.rule { width: 1px; margin: 8px 5px 4px 0; background: #d0cecc; }
.checks { width: 70px; margin: 0; padding: 0; border: 0; }
.checks legend { padding: 0; line-height: 29px; }
.checks label { display: flex; align-items: center; gap: 7px; height: 29px; padding-left: 4px; }
.checks input {
  appearance: none;
  display: grid;
  place-items: center;
  width: 16px;
  height: 16px;
  background: #fff;
  border: 1px solid #c6c6c6;
}
.checks input:checked::after {
  content: "";
  width: 9px;
  height: 5px;
  margin-bottom: 3px;
  border: solid #333;
  border-width: 0 0 1px 1px;
  transform: rotate(-45deg);
}
.collapse { margin: auto 11px 4px auto; }

/* Formula bar */
.formula-bar {
  display: flex;
  height: 57px;
  padding: 13px 7px 12px 6px;
  background: linear-gradient(#cfcecd, #e6e6e6 9px);
}
.name-box, .fx-box, .formula { display: flex; align-items: center; background: #fdfdfd; border: 1px solid #c6c6c6; height: 32px; }
.name-box { width: 127px; padding-right: 7px; }
.name-box input, .formula input { flex: 1; min-width: 0; height: 100%; border: 0; background: none; }
.formula { flex: 1; padding-right: 5px; margin-left: 3px; }
.tri-down { border: 4px solid transparent; border-top-color: #666; border-bottom: 0; }
.dots { width: 3px; height: 14px; background: repeating-linear-gradient(#aaa 0 3px, transparent 3px 5px); align-self: center; }
.formula-bar .dots { margin: 0 17px; }
.fx-box { width: 137px; justify-content: space-around; padding: 0 4px 0 0; }
.fx-box .plain { width: 42px; }
.fx-box .fx { font-family: "Liberation Serif", serif; font-style: italic; font-size: 22px; color: #555; }

/* Sheet */
.workspace { display: flex; flex: 1; min-height: 0; }
.sheet { position: relative; flex: 1; overflow: hidden; border-right: 1px solid #999; border-bottom: 1px solid #999; background: #fff; }
.cells { width: 100%; table-layout: fixed; border-collapse: separate; border-spacing: 0; font-size: 17px; color: #000; }
.c-row { width: 37px; }
.c-a { width: 14px; }
.c-b { width: 1006px; }
.c-c { width: 26px; }
.c-n { width: 87px; }
.cells th { padding: 0; font-weight: 400; background: #e6e6e6; }
.cells thead th {
  height: 25px;
  line-height: 24px;
  border-bottom: 1px solid #999;
  border-right: 1px solid #b5b5b5;
}
.cells thead th:last-child { border-right: 0; }
.corner svg { margin: 4px 4px 0 auto; }
.cells tbody th { height: 25px; line-height: 24px; border-right: 1px solid #999; border-bottom: 1px solid #aaa; }
.cells td { padding: 0; }
.shape { position: absolute; }
.s1 { left: 175px; top: 179px; }
.s2 { left: 580px; top: 177px; }
.s3 { left: 984px; top: 182px; }
.s4 { left: 1389px; top: 187px; }

/* Scroll bars */
.v-scroll { display: flex; flex-direction: column; width: 19px; margin: 2px 3px 0; background: #dadada; }
.v-gap { flex: 209; }
.v-thumb { flex: 468; background: #fff; border: 1px solid #ababab; border-bottom: 0; }
.scroll-btn { display: flex; align-items: center; justify-content: center; width: 19px; height: 19px; padding: 0; background: #fff; border: 1px solid #ababab; }
.arrow { border: 5px solid transparent; }
.arrow.up { border-bottom-color: #666; border-top: 0; }
.arrow.down { border-top-color: #666; border-bottom: 0; }
.arrow.left { border-right-color: #666; border-left: 0; }
.arrow.right { border-left-color: #666; border-right: 0; }
.arrow.left.pale { border-right-color: #bbb; }
.arrow.right.pale { border-left-color: #bbb; }

/* Sheet tabs */
.sheet-bar { display: flex; align-items: flex-start; height: 29px; padding-right: 25px; border-bottom: 1px solid #c6c6c6; font-size: 17px; }
.sheet-nav { display: flex; justify-content: space-between; align-items: center; width: 103px; height: 28px; padding: 0 41px 0 28px; }
.sheet-tab { line-height: 20px; white-space: nowrap; }
.sheet-tab.current {
  width: 59px;
  height: 26px;
  text-align: center;
  color: #217346;
  border: solid #fff;
  border-width: 0 2px;
  background: linear-gradient(#fff, #b4c2ab 22px, #fff 22px, #fff 23px, #217346 23px);
}
.sheet-tab.blue { width: 120px; height: 23px; margin: 2px 0 0 2px; line-height: 16px; text-align: center; color: #fff; background: #4472c4; box-shadow: 2px 0 #e6e6e6, 3px 0 #999; }
.add { margin: 4px auto 0 36px; }
.sheet-bar .dots { margin-right: 16px; }
.h-scroll { display: flex; width: 728px; height: 19px; margin-top: 4px; background: #dadada; }
.h-thumb { flex: 632; background: #fff; border: 1px solid #ababab; border-left: 0; }
.h-gap { flex: 58; }

/* Status bar */
.status { display: flex; align-items: center; justify-content: space-between; height: 26px; padding: 0 0 2px 9px; background: #f3f2f1; }
.views { display: flex; height: 26px; margin: 0 230px -2px 0; }
.view { width: 50px; }
.view.on { background: #cfcdcb; }

/* Taskbar */
.taskbar { display: flex; height: 50px; background: linear-gradient(90deg, #20332a, #1c2e2a 30%, #20332a 37%, #1c302b 55%, #20362f 68%, #20342c 76%, #28362f); color: #fff; }
.task { width: 62px; height: 50px; border-bottom: 3px solid transparent; padding-top: 2px; }
.task:nth-child(-n+2) { width: 60px; }
.task:nth-child(3) { margin-left: 3px; border-image: linear-gradient(90deg, transparent 6px, #76b9ed 6px 57px, transparent 57px) 3; }
.running { border-image: linear-gradient(90deg, transparent 6px, #76b9ed 6px 46px, #5b8db4 46px 57px, transparent 57px) 3; }
.task.current { background: linear-gradient(90deg, transparent 1px, #4d5d54 1px 57px, #3a4842 57px); border-image: linear-gradient(90deg, transparent 1px, #76b9ed 1px 57px, #5b8db4 57px) 3; }
.sogou-mini { margin: 13px 150px 0 auto; }
.weather { display: flex; align-items: center; gap: 12px; width: 122px; font-size: 18px; }
.tray { display: flex; align-items: center; justify-content: space-between; width: 114px; margin: 0 14px 0 7px; }
.clock { display: flex; flex-direction: column; align-items: center; width: 82px; padding-top: 2px; line-height: 23px; }
.notice { width: 20px; margin: 0 24px 0 22px; }
.show-desktop { width: 6px; border-left: 1px solid #6b7671; }

/* Floating input bar */
.ime {
  position: absolute;
  right: 0;
  bottom: 50px;
  display: flex;
  align-items: center;
  justify-content: space-between;
  width: 256px;
  height: 31px;
  padding-right: 7px;
  background: linear-gradient(90deg, transparent 24px, #fff 24px);
  color: #1d77cc;
  font-size: 18px;
}
.ime::before { content: ""; position: absolute; left: 24px; right: 0; top: 0; bottom: 0; border: solid #aaa; border-width: 1px 0; }
.ime b { margin: 0 4px 0 -2px; }

.gauge { position: absolute; right: 0; top: 702px; width: 11px; height: 64px; padding: 12px 1px 1px; border: 2px solid #777; border-radius: 6px; background: #fff; }
.gauge i { display: block; height: 100%; border-radius: 2px; background: #f03a3a; }

/* Watermark */
.watermark { position: absolute; right: 92px; bottom: 35px; opacity: .8; }
.mark-shape { fill: #fff; stroke: #d2d2d2; stroke-width: 2px; paint-order: stroke; }
.mark-bai { font: 700 78px "Liberation Sans", sans-serif; }
.mark-du { font: 400 50px "Liberation Sans", sans-serif; stroke: #ccc; stroke-width: 3px; }
.mark-cn { font: 900 58px "Noto Sans CJK SC", sans-serif; }
.mark-url { font: 400 40px "Noto Sans", sans-serif; fill: #fff; stroke: #ccc; stroke-width: 2px; paint-order: stroke; }
```
